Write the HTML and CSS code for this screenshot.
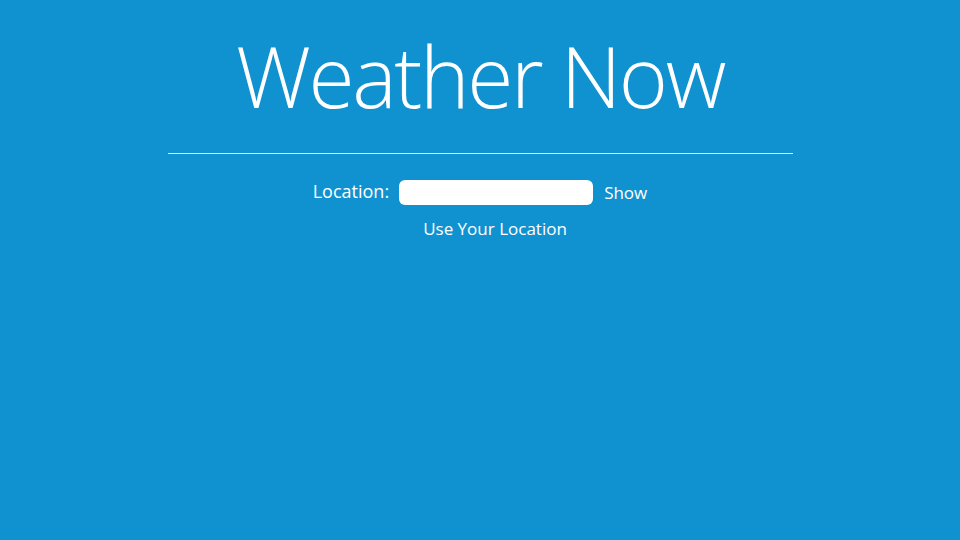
FILE: index.html
```html
<!DOCTYPE html>
<html>
<head>
<meta charset="utf-8">
<link rel="stylesheet" href="styles.css">
</head>
<body>
<div class="wrap">
  <h1 class="title">Weather Now</h1>
  <div class="rule"></div>
  <form class="form">
    <div class="row">
      <label class="label" for="loc">Location:</label>
      <input class="input" id="loc" type="text">
      <span class="btn">Show</span>
    </div>
    <div class="row2">
      <span class="btn">Use Your Location</span>
    </div>
  </form>
</div>
</body>
</html>
```
FILE: styles.css
```css
html, body {
  margin: 0;
  padding: 0;
  height: 100%;
}
body {
  background: #1192d0;
  color: #fff;
  font-family: "Open Sans", sans-serif;
}
.wrap {
  width: 625px;
  margin: 0 auto;
  padding-top: 16px;
}
.title {
  margin: 0;
  font-weight: 300;
  font-size: 84px;
  line-height: 120px;
  text-align: center;
  letter-spacing: -2.4px;
}
.rule {
  height: 1px;
  background: #e6f4fb;
  margin-top: 17px;
}
.form {
  margin-top: 25px;
}
.row {
  display: flex;
  justify-content: center;
  align-items: center;
}
.label {
  font-size: 18px;
  margin-right: 10px;
  margin-bottom: 3px;
}
.input {
  width: 194px;
  height: 25px;
  box-sizing: border-box;
  border: none;
  border-radius: 6px;
  background: #fff;
  padding: 0 6px;
  margin-right: 11px;
}
.btn {
  font-size: 17px;
}
.row2 {
  display: flex;
  justify-content: center;
  padding-left: 30px;
  margin-top: 11px;
}
```
